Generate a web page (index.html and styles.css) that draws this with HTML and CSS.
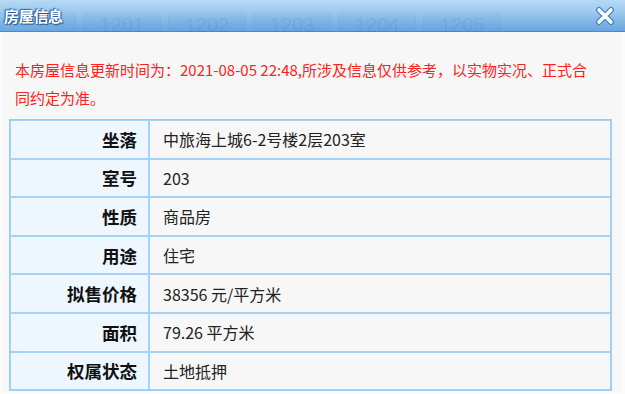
FILE: index.html
```html
<!DOCTYPE html>
<html lang="zh-CN">
<head>
<meta charset="utf-8">
<link rel="stylesheet" href="styles.css">
</head>
<body>
<div class="dialog">
  <div class="titlebar">
    <div class="ghost-tabs">
      <span class="gt gt-first"></span>
      <span class="gt">1201</span>
      <span class="gt">1202</span>
      <span class="gt">1203</span>
      <span class="gt">1204</span>
      <span class="gt">1205</span>
    </div>
    <span class="title">房屋信息</span>
    <span class="close">
      <svg width="20" height="20" viewBox="0 0 20 20">
        <path d="M4 4 L16 16 M16 4 L4 16" stroke="#3f7fc4" stroke-width="6" stroke-linecap="round" fill="none"/>
        <path d="M4 4 L16 16 M16 4 L4 16" stroke="#ffffff" stroke-width="3.6" stroke-linecap="round" fill="none"/>
      </svg>
    </span>
  </div>
  <div class="content">
    <p class="notice">本房屋信息更新时间为：2021-08-05 22:48,所涉及信息仅供参考，以实物实况、正式合同约定为准。</p>
    <table class="info">
      <tr><th>坐落</th><td>中旅海上城6-2号楼2层203室</td></tr>
      <tr><th>室号</th><td>203</td></tr>
      <tr><th>性质</th><td>商品房</td></tr>
      <tr><th>用途</th><td>住宅</td></tr>
      <tr><th>拟售价格</th><td>38356 元/平方米</td></tr>
      <tr><th>面积</th><td>79.26 平方米</td></tr>
      <tr><th>权属状态</th><td>土地抵押</td></tr>
    </table>
  </div>
</div>
</body>
</html>
```

FILE: styles.css
```css
html, body {
  margin: 0;
  padding: 0;
}
body {
  width: 625px;
  height: 394px;
  overflow: hidden;
  background: #f7f7f7;
  font-family: "Noto Sans CJK SC", "Noto Sans", sans-serif;
}
.dialog {
  width: 625px;
  height: 394px;
  display: flex;
  flex-direction: column;
}
.titlebar {
  position: relative;
  height: 32px;
  flex: none;
  border-bottom: 1px solid #4a8ad2;
  background: linear-gradient(to bottom, #b6daf6 0%, #9cc8ee 40%, #7db4e6 75%, #6aa6e0 100%);
  display: flex;
  align-items: center;
  justify-content: space-between;
  padding: 0 10px 0 4px;
  box-sizing: border-box;
}
.ghost-tabs {
  position: absolute;
  left: 40px;
  top: 13px;
  bottom: 0;
  display: flex;
  gap: 7px;
}
.gt {
  width: 78px;
  display: flex;
  align-items: center;
  justify-content: center;
  font-family: "Liberation Sans", sans-serif;
  font-size: 20px;
  color: rgba(40, 80, 140, 0.10);
  background: rgba(40, 90, 160, 0.035);
  border: 1px solid rgba(40, 90, 160, 0.04);
  border-bottom: none;
  padding-top: 6px;
  box-sizing: border-box;
}
.gt-first {
  width: 36px;
}
.title {
  position: relative;
  font-size: 15px;
  font-weight: bold;
  color: #ffffff;
  letter-spacing: -0.3px;
  text-shadow: 0 0 2px #2d5f9e, 1px 1px 1px #234f8a, -1px -1px 1px #3a6cab;
}
.close {
  position: relative;
  display: flex;
  width: 20px;
  height: 20px;
}
.content {
  flex: 1;
  border-left: 3px solid #fbfbfb;
  border-right: 3px solid #fbfbfb;
  border-bottom: 3px solid #fbfbfb;
  padding-left: 6px;
  box-sizing: border-box;
}
.notice {
  margin: 24px 0 7px 0;
  padding: 0 0 0 6px;
  width: 578px;
  font-size: 15px;
  line-height: 28px;
  color: #ff2020;
}
.info {
  width: 603px;
  border-collapse: separate;
  border-spacing: 0;
  border: 1px solid #99cdf5;
}
.info th, .info td {
  border: 1px solid #a5d3f8;
  height: 38.6px;
  padding: 0;
  box-sizing: border-box;
}
.info th {
  width: 139px;
  background: #eef6ff;
  text-align: right;
  padding-right: 11px;
  font-size: 17.5px;
  font-weight: bold;
  color: #111111;
}
.info td {
  background: #f7f7f7;
  padding-left: 13px;
  font-size: 16px;
  color: #222222;
}
```
